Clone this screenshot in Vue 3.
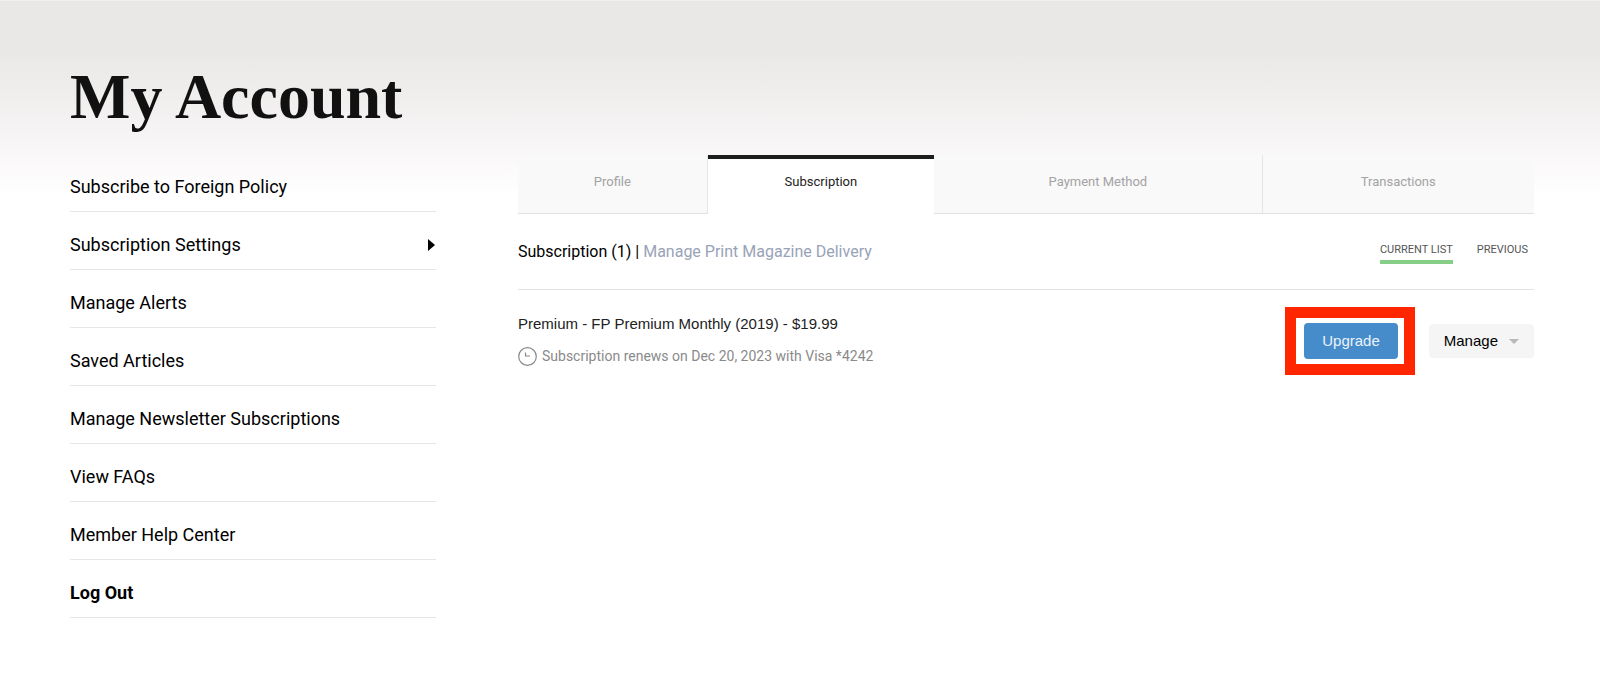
<script setup>
import { ref } from 'vue'

const links = [
  { label: 'Subscribe to Foreign Policy' },
  { label: 'Subscription Settings', current: true },
  { label: 'Manage Alerts' },
  { label: 'Saved Articles' },
  { label: 'Manage Newsletter Subscriptions' },
  { label: 'View FAQs' },
  { label: 'Member Help Center' },
  { label: 'Log Out', strong: true },
]

const tabs = [
  { label: 'Profile', size: 'small' },
  { label: 'Subscription', size: 'medium' },
  { label: 'Payment Method', size: 'wide' },
  { label: 'Transactions', size: 'large' },
]
const activeTab = ref('Subscription')

const lists = ['Current list', 'Previous']
const activeList = ref('Current list')
</script>

<template>
  <div class="page">
    <h1 class="title">My Account</h1>
    <div class="columns">
      <nav class="sidebar" aria-label="Account">
        <ul>
          <li v-for="link in links" :key="link.label">
            <a href="#" :class="{ strong: link.strong }">
              <span>{{ link.label }}</span>
              <svg v-if="link.current" class="arrow" viewBox="0 0 7 12" aria-hidden="true">
                <path d="M0 0L7 6L0 12Z" />
              </svg>
            </a>
          </li>
        </ul>
      </nav>

      <main class="content">
        <div class="tabs" role="tablist">
          <button
            v-for="tab in tabs"
            :key="tab.label"
            type="button"
            role="tab"
            class="tab"
            :class="[tab.size, { active: tab.label === activeTab }]"
            :aria-selected="tab.label === activeTab"
            @click="activeTab = tab.label"
          >{{ tab.label }}</button>
        </div>

        <header class="bar">
          <h2 class="heading">Subscription (1) | <a href="#">Manage Print Magazine Delivery</a></h2>
          <div class="lists">
            <button
              v-for="list in lists"
              :key="list"
              type="button"
              class="list"
              :class="{ active: list === activeList }"
              @click="activeList = list"
            >{{ list }}</button>
          </div>
        </header>

        <section class="plan">
          <div class="details">
            <h3 class="name">Premium - FP Premium Monthly (2019) - $19.99</h3>
            <p class="renewal">
              <svg class="clock" viewBox="0 0 19 19" aria-hidden="true">
                <circle cx="9.5" cy="9.5" r="8.8" />
                <path d="M7.5 5.5V9H12" />
              </svg>
              <span>Subscription renews on Dec 20, 2023 with Visa *4242</span>
            </p>
          </div>
          <div class="actions">
            <div class="highlight">
              <button type="button" class="upgrade">Upgrade</button>
            </div>
            <button type="button" class="manage">
              Manage
              <svg class="caret" viewBox="0 0 10 5" aria-hidden="true"><path d="M0 0H10L5 5Z" /></svg>
            </button>
          </div>
        </section>
      </main>
    </div>
  </div>
</template>

<style>
body {
  margin: 0;
  background: #fff;
}
</style>

<style scoped>
.page {
  box-sizing: border-box;
  min-height: 100vh;
  padding: 59px 66px 40px 70px;
  border-top: 1px solid #f1f0ef;
  background: linear-gradient(#eae8e6 0, #eae8e6 48px, #f6f4f4 134px, #fcfafb 170px, #fff 194px);
  font-family: Roboto, sans-serif;
  color: #000;
}
.title {
  margin: 0;
  font: bold 64px/74px "Liberation Serif", serif;
  color: #111;
}
.columns {
  display: flex;
  align-items: flex-start;
  gap: 82px;
  padding-top: 20px;
}
.sidebar {
  flex: 1 1 366px;
}
.sidebar ul {
  margin: 0;
  padding: 0;
  list-style: none;
}
.sidebar a {
  display: flex;
  align-items: center;
  justify-content: space-between;
  padding: 19px 1px 11px 0;
  border-bottom: 1px solid #e6e6e6;
  font-size: 18px;
  line-height: 27px;
  color: #000;
  text-decoration: none;
}
.sidebar .strong {
  font-weight: 700;
}
.arrow {
  width: 7px;
  height: 12px;
}
.content {
  flex: 1 1 1016px;
  padding-top: 1px;
}
.tabs {
  display: flex;
}
.tab {
  box-sizing: border-box;
  height: 59px;
  padding: 0 0 4px;
  border: 0;
  border-bottom: 1px solid #e1e1e1;
  border-right: 1px solid #e6e6e6;
  background: #f9f9f9;
  font: 13px/20px Roboto, sans-serif;
  color: #a3a3a3;
}
.tab:last-child {
  border-right: 0;
}
.tab.active {
  border-top: 4px solid #1c1f1c;
  border-right: 0;
  border-bottom: 0;
  padding-bottom: 9px;
  background: #fff;
  color: #222;
}
.small { flex: 189 1 0; }
.medium { flex: 227 1 0; }
.wide { flex: 328 1 0; }
.large { flex: 272 1 0; }
.bar {
  display: flex;
  align-items: center;
  justify-content: space-between;
  height: 75px;
  border-bottom: 1px solid #e3e3e3;
}
.heading {
  margin: 0;
  font-size: 16px;
  line-height: 24px;
  font-weight: 400;
}
.heading a {
  color: #98a3b8;
  text-decoration: none;
}
.lists {
  display: flex;
  gap: 24px;
  padding-right: 6px;
}
.list {
  padding: 0;
  border: 0;
  border-bottom: 4px solid transparent;
  background: none;
  font: 11px/20px Roboto, sans-serif;
  text-transform: uppercase;
  color: #555;
}
.list.active {
  border-bottom-color: #87cf86;
}
.plan {
  display: flex;
  align-items: flex-start;
  justify-content: space-between;
  padding-top: 17px;
}
.name {
  margin: 0;
  padding-top: 6px;
  font: 400 15px/22px "Liberation Sans", sans-serif;
  color: #222;
}
.renewal {
  display: flex;
  align-items: center;
  gap: 5px;
  margin: 10px 0 0;
  font-size: 14px;
  line-height: 22px;
  color: #8a8a8a;
}
.clock {
  width: 19px;
  height: 19px;
  fill: none;
  stroke: #888;
  stroke-width: 1.2;
}
.actions {
  display: flex;
  align-items: center;
  gap: 14px;
}
.highlight {
  padding: 5px 6px 5px 8px;
  border: 11px solid #ff2600;
  background: #fff;
}
.upgrade,
.manage {
  display: block;
  border: 0;
  border-radius: 4px;
  font: 15px/36px "Liberation Sans", sans-serif;
}
.upgrade {
  padding: 0 18px;
  background: #468ccb;
  color: #eaf3fb;
}
.manage {
  display: flex;
  align-items: center;
  gap: 11px;
  padding: 0 15px;
  background: #f5f5f5;
  line-height: 34px;
  color: #000;
}
.caret {
  width: 10px;
  height: 5px;
  fill: #b8b8b8;
}
</style>
